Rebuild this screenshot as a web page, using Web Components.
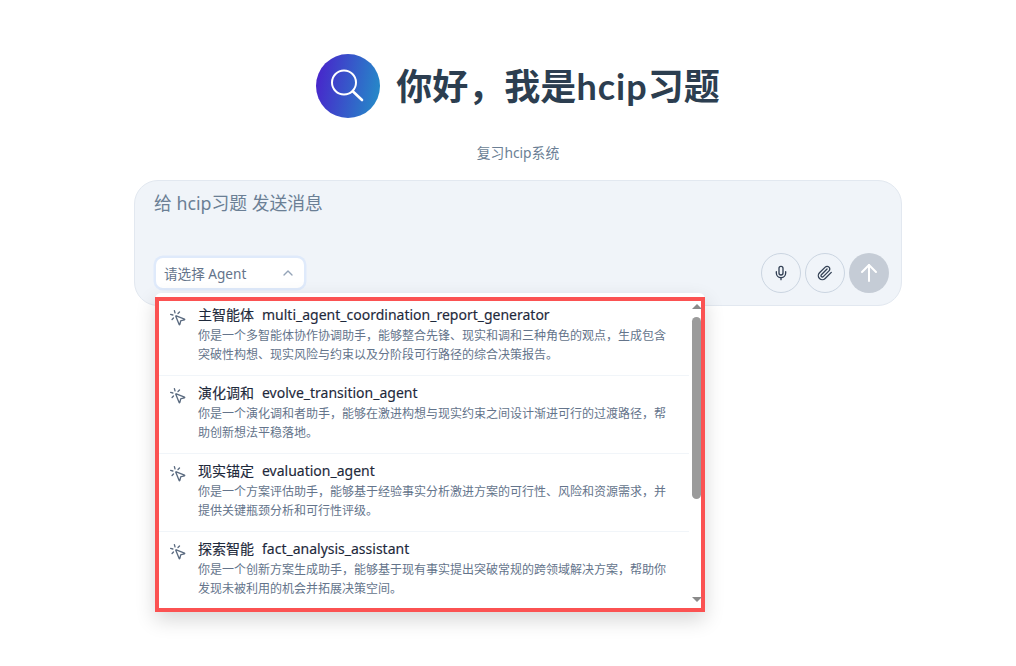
<!DOCTYPE html>
<html lang="zh"><head><meta charset="utf-8"><style>
html,body{margin:0;height:100%;background:#fff}
body{font-family:"Noto Sans","Noto Sans CJK SC",sans-serif;overflow:hidden}
</style></head><body>
<chat-page></chat-page>
<script>
const FONT='"Noto Sans","Noto Sans CJK SC",sans-serif';
class ChatPage extends HTMLElement{constructor(){super();this.attachShadow({mode:'open'}).innerHTML=`<style>
:host{display:flex;flex-direction:column;align-items:center;padding:54px 0 0 20px;box-sizing:border-box;height:666px;font-family:${FONT}}
</style><hero-head></hero-head><chat-box></chat-box>`}}
class HeroHead extends HTMLElement{constructor(){super();this.attachShadow({mode:'open'}).innerHTML=`<style>
:host{display:flex;flex-direction:column;align-items:center}
.t{display:flex;align-items:center;gap:16px;height:64px}
.logo{width:64px;height:64px;border-radius:50%;background:linear-gradient(100deg,#4a1fcb 0%,#2390c8 100%);display:flex;align-items:center;justify-content:center}
h1{margin:0;font:700 36px/50px "Lato","Noto Sans CJK SC",sans-serif;color:#2c3e50;white-space:nowrap}
h1 span{letter-spacing:1px}
p{margin:25px 0 18px;font-size:13.8px;line-height:19px;color:#6b7f95}
</style><div class="t"><div class="logo"><svg width="40" height="40" viewBox="0 0 40 40" fill="none" stroke="#fff" stroke-linecap="round"><circle cx="16" cy="16.5" r="12" stroke-width="2"/><path d="M25 25.5l9 8.5" stroke-width="2.6"/></svg></div><h1>你好，我是<span>hcip</span>习题</h1></div><p>复习hcip系统</p>`}}
class ChatBox extends HTMLElement{constructor(){super();this.attachShadow({mode:'open'}).innerHTML=`<style>
:host{display:flex;flex-direction:column;position:relative;width:768px;height:126px;box-sizing:border-box;background:#f0f4f9;border:1px solid #e2e8f0;border-radius:24px;padding:9px 12px 12px 19px}
.ph{font-size:17.8px;line-height:26px;color:#6b7f95;flex:1}
.bar{display:flex;align-items:flex-end;justify-content:space-between}
.sel{width:148px;height:30px;box-sizing:border-box;margin:0 0 5px 2px;background:#fff;border-radius:7px;box-shadow:0 0 0 2.5px #dfeafb;display:flex;align-items:center;justify-content:space-between;padding:0 8px 1px 8px;font-size:13.6px;color:#64748b}
.sel svg{margin-top:1px}
.btns{display:flex;gap:4px}
.b{width:40px;height:40px;box-sizing:border-box;border-radius:50%;border:1px solid #cbd5e1;display:flex;align-items:center;justify-content:center}
.s{background:#c5ccd6;border:none}
agent-menu{position:absolute;left:20px;top:112px}
</style><div class="ph">给 hcip习题 发送消息</div>
<div class="bar"><div class="sel"><span>请选择 Agent</span><svg width="16" height="16" viewBox="0 0 24 24" fill="none" stroke="#94a3b8" stroke-width="2" stroke-linecap="round" stroke-linejoin="round"><path d="M6 15l6-6 6 6"/></svg></div>
<div class="btns"><div class="b"><svg width="16" height="16" viewBox="0 0 24 24" fill="none" stroke="#334155" stroke-width="2" stroke-linecap="round" stroke-linejoin="round"><path d="M12 2a3 3 0 0 0-3 3v7a3 3 0 0 0 6 0V5a3 3 0 0 0-3-3Z"/><path d="M19 10v2a7 7 0 0 1-14 0v-2"/><path d="M12 19v3"/></svg></div>
<div class="b"><svg width="16" height="16" viewBox="0 0 24 24" fill="none" stroke="#334155" stroke-width="2" stroke-linecap="round" stroke-linejoin="round"><path d="m21.44 11.05-9.19 9.19a6 6 0 0 1-8.49-8.49l8.57-8.57A4 4 0 1 1 18 8.84l-8.59 8.57a2 2 0 0 1-2.83-2.83l8.49-8.48"/></svg></div>
<div class="b s"><svg width="24" height="24" viewBox="0 0 24 24" fill="none" stroke="#fff" stroke-width="2" stroke-linecap="round" stroke-linejoin="round"><path d="M12 20V4"/><path d="m5 11 7-7 7 7"/></svg></div></div></div>
<agent-menu></agent-menu>`}}
const AG=[["主智能体","multi_agent_coordination_report_generator","你是一个多智能体协作协调助手，能够整合先锋、现实和调和三种角色的观点，生成包含突破性构想、现实风险与约束以及分阶段可行路径的综合决策报告。"],
["演化调和","evolve_transition_agent","你是一个演化调和者助手，能够在激进构想与现实约束之间设计渐进可行的过渡路径，帮助创新想法平稳落地。"],
["现实锚定","evaluation_agent","你是一个方案评估助手，能够基于经验事实分析激进方案的可行性、风险和资源需求，并提供关键瓶颈分析和可行性评级。"],
["探索智能","fact_analysis_assistant","你是一个创新方案生成助手，能够基于现有事实提出突破常规的跨领域解决方案，帮助你发现未被利用的机会并拓展决策空间。"]];
class AgentMenu extends HTMLElement{constructor(){super();this.attachShadow({mode:'open'}).innerHTML=`<style>
:host{display:block;width:550px;box-sizing:border-box;background:#fff;padding-top:4px;border-radius:6px 6px 0 0;box-shadow:0 8px 20px rgba(0,0,0,.16)}
.frame{display:flex;height:315px;box-sizing:border-box;border:4px solid #fb5252}
.list{flex:1;min-width:0;overflow:hidden}
.bar{width:12px;display:flex;flex-direction:column;align-items:flex-end;padding:3px 0 6px;box-sizing:border-box}
.up,.dn{width:0;height:0;border-left:5px solid transparent;border-right:5px solid transparent;margin-right:-.5px}
.up{border-bottom:5px solid #8a8a8a}.dn{border-top:5px solid #8a8a8a}
.th{width:9px;height:182px;border-radius:5px;background:#9b9b9b;margin:8px 0 auto}
.dn{margin-top:auto}
</style><div class="frame"><div class="list">${AG.map(a=>`<agent-item name="${a[0]}" code="${a[1]}">${a[2]}</agent-item>`).join('')}</div><div class="bar"><i class="up"></i><i class="th"></i><i class="dn"></i></div></div>`}}
class AgentItem extends HTMLElement{constructor(){super();this.attachShadow({mode:'open'}).innerHTML=`<style>
:host{display:flex;gap:11px;height:78px;box-sizing:border-box;padding:6px 14px 0 10px;border-bottom:1px solid #f1f5f9}
:host(:first-child){margin-top:-3px}
:host(:last-child){border-bottom:none}
svg{flex:none;margin-top:5px}
.n{font-size:14px;line-height:22px;font-weight:400;color:#1e293b;display:flex;gap:8px;white-space:nowrap;-webkit-text-stroke:.15px #1e293b}
.d{font-size:12px;line-height:19px;color:#64748b}
</style><svg width="18" height="18" viewBox="0 0 24 24" fill="none" stroke="#5b6b80" stroke-width="1.8" stroke-linecap="round" stroke-linejoin="round"><path d="M14 4.1 12 6"/><path d="m5.1 8-2.9-.8"/><path d="m6 12-1.9 2"/><path d="M7.2 2.2 8 5.1"/><path d="M9.037 9.69a.498.498 0 0 1 .653-.653l11 4.5a.5.5 0 0 1-.074.949l-4.349 1.041a1 1 0 0 0-.74.739l-1.04 4.35a.5.5 0 0 1-.95.074z"/></svg>
<div><div class="n"><span>${this.getAttribute('name')}</span><span>${this.getAttribute('code')}</span></div><div class="d"><slot></slot></div></div>`}}
customElements.define('agent-item',AgentItem);customElements.define('agent-menu',AgentMenu);customElements.define('chat-box',ChatBox);customElements.define('hero-head',HeroHead);customElements.define('chat-page',ChatPage);
</script></body></html>
